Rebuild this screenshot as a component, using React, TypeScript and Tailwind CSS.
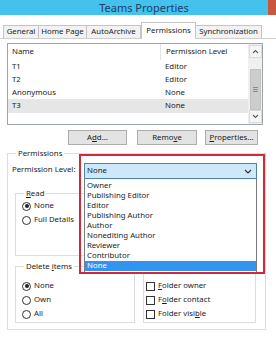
import React from "react";

const font = { fontFamily: '"Noto Sans", "Open Sans", sans-serif' };

function U({ children }: { children: React.ReactNode }) {
  return <span className="underline underline-offset-[1px] decoration-[0.5px]">{children}</span>;
}

function Radio({ checked, label }: { checked?: boolean; label: React.ReactNode }) {
  return (
    <div className="flex items-center h-[14px] gap-[3px]">
      <div className="w-[9px] h-[9px] rounded-full border border-[#333] bg-white flex items-center justify-center">
        {checked && <div className="w-[4px] h-[4px] rounded-full bg-[#222]" />}
      </div>
      <span>{label}</span>
    </div>
  );
}

function Check({ label }: { label: React.ReactNode }) {
  return (
    <div className="flex items-center h-[14px] gap-[3px]">
      <div className="w-[9px] h-[9px] border border-[#333] bg-white" />
      <span>{label}</span>
    </div>
  );
}

const tabs = [
  { name: "General", w: "w-[36px]" },
  { name: "Home Page", w: "w-[49px]" },
  { name: "AutoArchive", w: "w-[55px]" },
  { name: "Permissions", w: "w-[55px]", active: true },
  { name: "Synchronization", w: "w-[67px]" },
];

const rows = [
  { n: "T1", p: "Editor" },
  { n: "T2", p: "Editor" },
  { n: "Anonymous", p: "None" },
  { n: "T3", p: "None", sel: true },
];

const levels = [
  "Owner",
  "Publishing Editor",
  "Editor",
  "Publishing Author",
  "Author",
  "Nonediting Author",
  "Reviewer",
  "Contributor",
];

export default function App() {
  return (
    <div
      className="w-[276px] h-[342px] bg-white relative overflow-hidden text-[7.8px] leading-none text-[#1c1c1c]"
      style={font}
    >
      {/* title bar */}
      <div className="h-[15px] bg-[#45c1ee] flex items-center justify-center pl-[12px] relative">
        <span className="text-[11px] text-[#1b3f66] leading-none">Teams Properties</span>
        <div className="absolute right-0 top-0 w-[8px] h-[15px] bg-[#c9573f]" />
      </div>

      {/* tabs */}
      <div className="mt-[7px] h-[17px] flex items-end pl-[3px] border-b border-[#cfcfcf]">
        {tabs.map((t) =>
          t.active ? (
            <div
              key={t.name}
              className={`${t.w} h-[17px] -mb-px bg-white border border-b-0 border-[#c4c4c4] flex items-center justify-center relative z-10`}
            >
              {t.name}
            </div>
          ) : (
            <div
              key={t.name}
              className={`${t.w} h-[13px] bg-[#f2f2f2] border border-b-0 border-[#c4c4c4] -ml-px first:ml-0 flex items-center justify-center`}
            >
              {t.name}
            </div>
          )
        )}
      </div>

      {/* list */}
      <div className="mt-[4px] ml-[7px] w-[256px] h-[82px] border border-[#9ea4ab] flex">
        <div className="flex-1 flex flex-col">
          <div className="h-[16px] flex items-center">
            <div className="w-[152px] pl-[4px]">Name</div>
            <div className="pl-[5px] border-l border-[#e4e4e4] h-full flex items-center">Permission Level</div>
          </div>
          <div className="flex flex-col">
            {rows.map((r) => (
              <div
                key={r.n}
                className={`flex items-center ${r.sel ? "h-[14px] bg-[#e6e6e6]" : "h-[13px]"}`}
              >
                <div className="w-[152px] pl-[4px]">{r.n}</div>
                <div className="pl-[5px]">{r.p}</div>
              </div>
            ))}
          </div>
        </div>
        <div className="w-[14px] bg-[#f0f0f0] flex flex-col items-center">
          <div className="w-[13px] h-[13px] mt-px border border-[#dadada] bg-[#f6f6f6] flex items-center justify-center">
            <svg width="7" height="5" viewBox="0 0 7 5">
              <path d="M1 4 L3.5 1.5 L6 4" fill="none" stroke="#606060" strokeWidth="1.1" />
            </svg>
          </div>
          <div className="w-[11px] mt-[11px] h-[43px] bg-[#cdcdcd] border border-[#c2c2c2] flex items-center justify-center">
            <svg width="5" height="5" viewBox="0 0 5 5">
              <path d="M0 0.5 H5 M0 2.5 H5 M0 4.5 H5" stroke="#7a7a7a" strokeWidth="0.8" />
            </svg>
          </div>
          <div className="flex-1" />
          <div className="w-[13px] h-[13px] mb-px border border-[#dadada] bg-[#f6f6f6] flex items-center justify-center">
            <svg width="7" height="5" viewBox="0 0 7 5">
              <path d="M1 1 L3.5 3.5 L6 1" fill="none" stroke="#606060" strokeWidth="1.1" />
            </svg>
          </div>
        </div>
      </div>

      {/* buttons */}
      <div className="mt-[5px] flex pl-[68px]">
        <div className="w-[59px] h-[15px] bg-[#e3e3e3] border border-[#adadad] flex items-center justify-center">
          A<U>d</U>d...
        </div>
        <div className="ml-[10px] w-[60px] h-[15px] bg-[#e3e3e3] border border-[#adadad] flex items-center justify-center">
          Remo<U>v</U>e
        </div>
        <div className="ml-[8px] w-[53px] h-[15px] bg-[#e3e3e3] border border-[#adadad] flex items-center justify-center">
          <U>P</U>roperties...
        </div>
      </div>

      {/* permissions group */}
      <fieldset className="mt-[3px] ml-[7px] w-[259px] h-[182px] border border-[#d9dee2] pl-[7px] pr-[9px]">
        <legend className="ml-[1px] px-[2px] h-[10px] leading-[10px]">Permissions</legend>
        <div className="mt-[4px] flex items-center h-[16px] -ml-[3px]">
          <span className="w-[72px]">Permission Level:</span>
        </div>
        <div className="mt-[10px] grid grid-cols-[120px_113px] gap-x-[8px]">
          <div className="flex flex-col">
            <fieldset className="h-[68px] border border-[#d9dee2] pl-[6px]">
              <legend className="ml-[2px] px-[2px] h-[10px] leading-[10px]">
                <U>R</U>ead
              </legend>
              <div className="mt-[1px]">
                <Radio checked label="None" />
                <Radio label="Full Details" />
              </div>
            </fieldset>
            <fieldset className="mt-[5px] h-[62px] border border-[#d9dee2] pl-[6px]">
              <legend className="ml-[2px] px-[2px] h-[10px] leading-[10px]">
                Delete <U>i</U>tems
              </legend>
              <div className="mt-[8px]">
                <Radio checked label="None" />
                <Radio label="Own" />
                <Radio label="All" />
              </div>
            </fieldset>
          </div>
          <div className="flex flex-col">
            <fieldset className="h-[68px] border border-[#d9dee2] pl-[4px]">
              <legend className="ml-[2px] px-[2px] h-[10px] leading-[10px]">Write</legend>
            </fieldset>
            <fieldset className="mt-[5px] h-[62px] border border-[#d9dee2] pl-[2px]">
              <legend className="ml-[2px] px-[2px] h-[10px] leading-[10px]">Other</legend>
              <div className="mt-[8px]">
                <Check label={<><U>F</U>older owner</>} />
                <Check label={<>F<U>o</U>lder contact</>} />
                <Check label={<>Folder visi<U>b</U>le</>} />
              </div>
            </fieldset>
          </div>
        </div>
      </fieldset>

      {/* combo box */}
      <div className="absolute left-[84px] top-[163px] w-[173px] h-[16px] bg-[#cde8f8] border border-[#4f82ad] flex items-center pl-[2px] pr-[4px] z-20">
        <span className="flex-1">None</span>
        <svg width="8" height="5" viewBox="0 0 8 5">
          <path d="M1 1 L4 4 L7 1" fill="none" stroke="#333" strokeWidth="1.2" />
        </svg>
      </div>

      {/* dropdown list */}
      <div className="absolute left-[84px] top-[179px] w-[173px] h-[94px] bg-white border border-[#7a7a7a] border-t-0 pt-[2px] z-20">
        {levels.map((l) => (
          <div key={l} className="h-[10px] flex items-center pl-[2px]">
            {l}
          </div>
        ))}
        <div className="h-[10px] flex items-center pl-[2px] bg-[#3393f0] text-white">None</div>
      </div>

      {/* red highlight */}
      <div className="absolute left-[79px] top-[154px] w-[186px] h-[120px] border-2 border-[#d32a3a] z-30" />
    </div>
  );
}
